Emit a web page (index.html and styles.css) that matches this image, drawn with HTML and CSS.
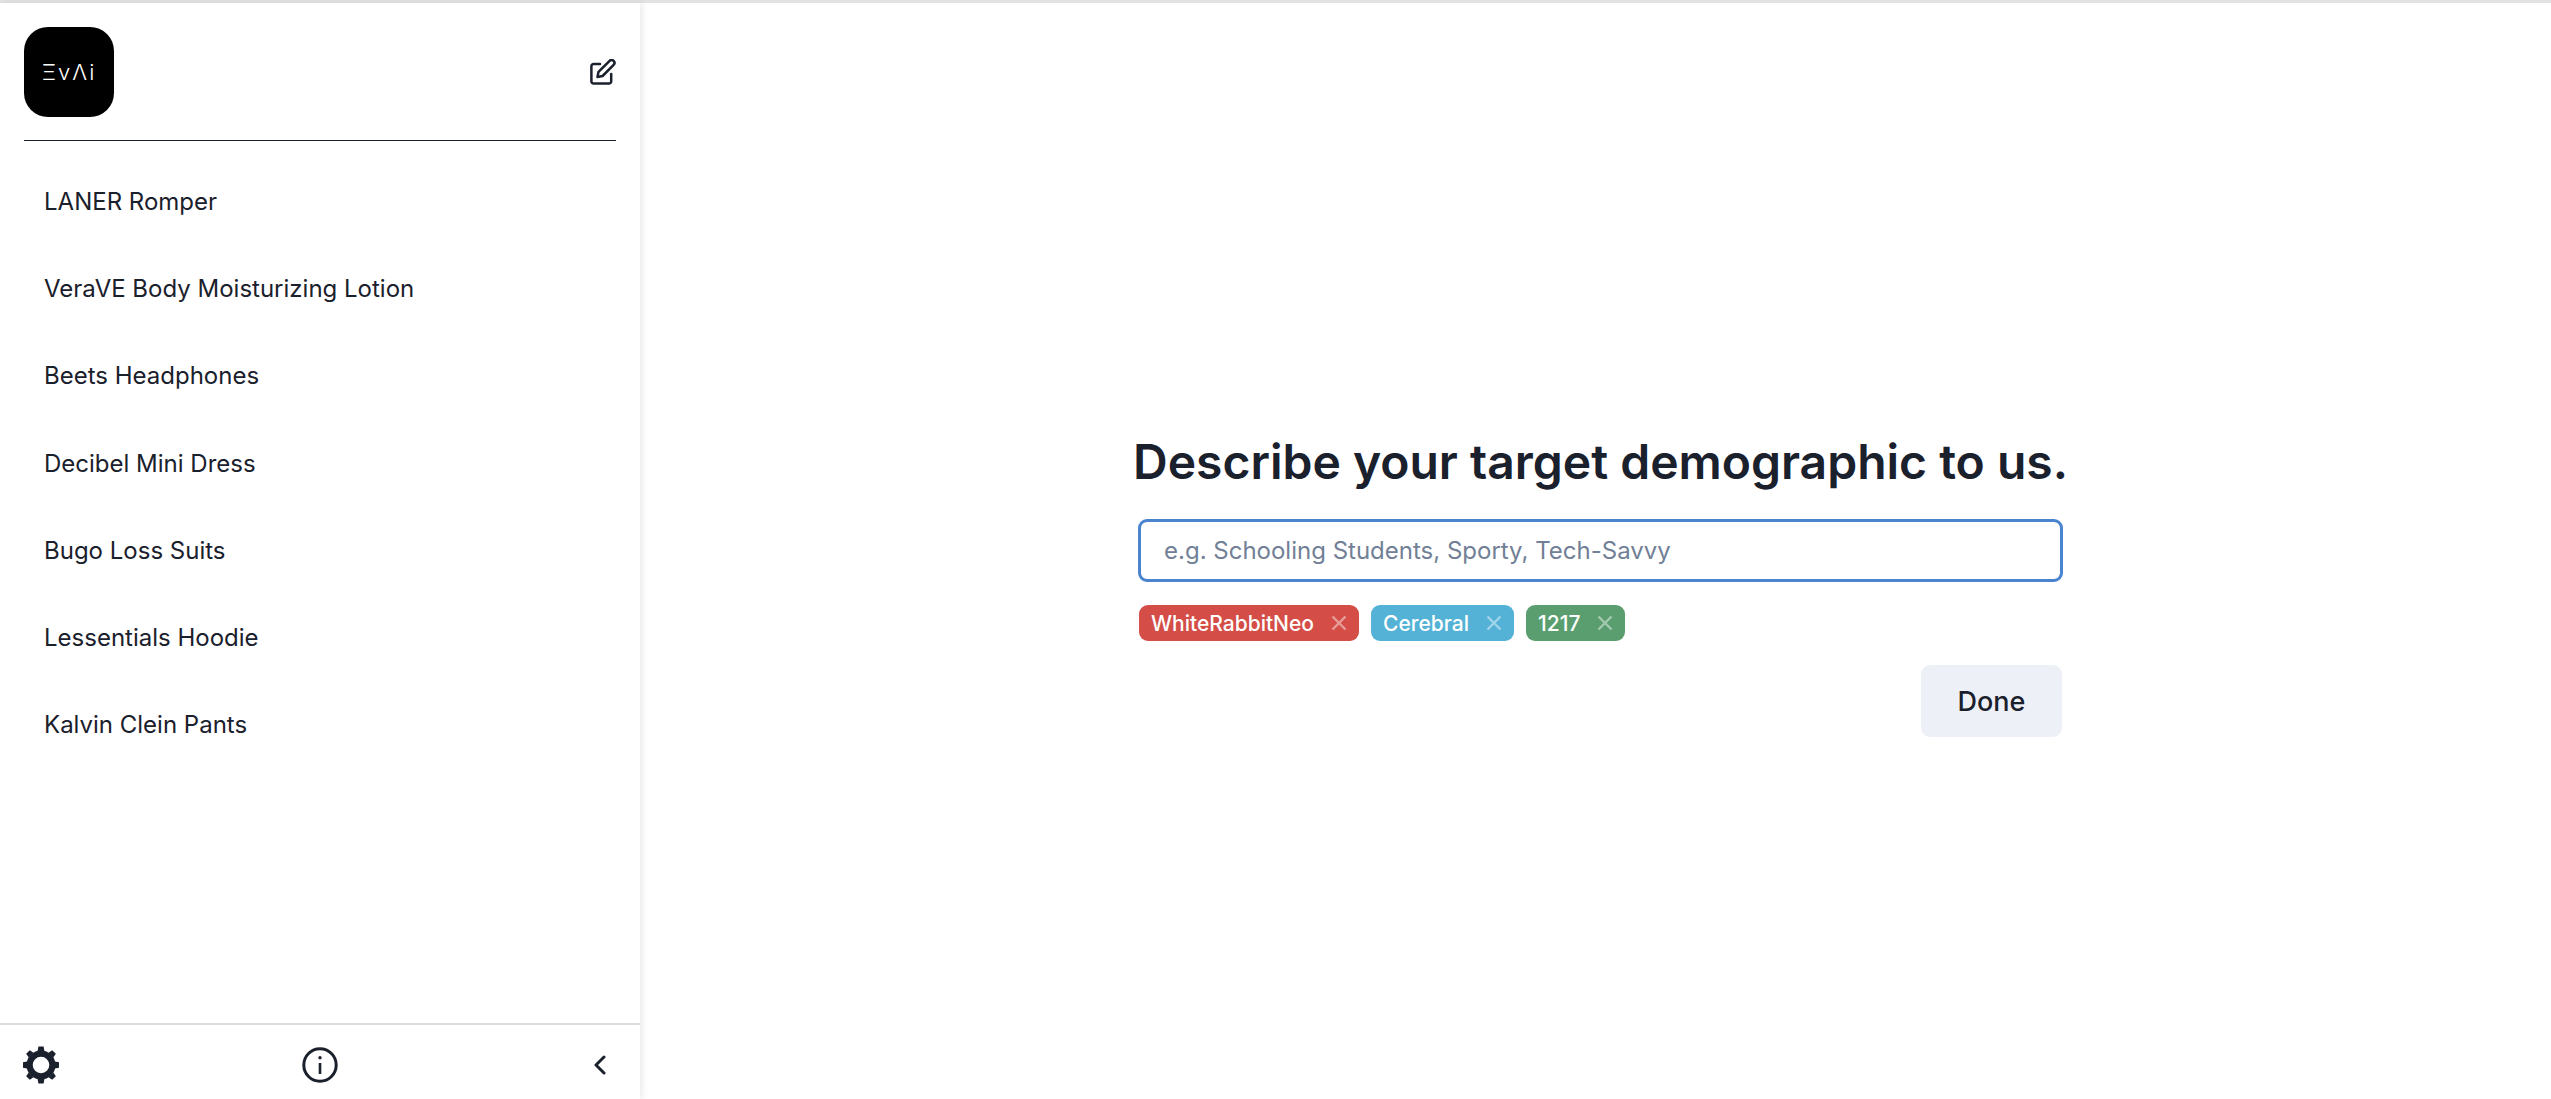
FILE: index.html
```html
<!DOCTYPE html>
<html lang="en">
<head>
<meta charset="utf-8">
<title>EvAi</title>
<link rel="stylesheet" href="styles.css">
</head>
<body>
<div class="topline"></div>
<div class="app">
  <aside class="sidebar">
    <header class="side-head">
      <div class="logo"><span class="logo-text">ΞvΛi</span></div>
      <button class="icon-btn" aria-label="New">
        <svg class="ic-edit" viewBox="0 0 26 26" fill="none" stroke="currentColor" stroke-width="2.5" stroke-linecap="round" stroke-linejoin="round"><path d="M10 5H3.6a2.2 2.2 0 0 0-2.2 2.2v15.2a2.2 2.2 0 0 0 2.2 2.2H19a2.2 2.2 0 0 0 2.2-2.2V15"/><path d="M7.5 18l1-5.2L19.6 1.8a2.8 2.8 0 0 1 4 4L12.6 17z"/></svg>
      </button>
    </header>
    <nav class="items">
      <a class="item">LANER Romper</a>
      <a class="item">VeraVE Body Moisturizing Lotion</a>
      <a class="item">Beets Headphones</a>
      <a class="item">Decibel Mini Dress</a>
      <a class="item">Bugo Loss Suits</a>
      <a class="item">Lessentials Hoodie</a>
      <a class="item">Kalvin Clein Pants</a>
    </nav>
    <footer class="side-foot">
      <svg class="ic-gear" viewBox="0 0 36 38" fill="currentColor">
        <defs><path id="tooth" d="M14.6 5 L15.4 .6 H20.6 L21.4 5 Z"/></defs>
        <circle cx="18" cy="19" r="11.4" fill="none" stroke="currentColor" stroke-width="6.2"/>
        <use href="#tooth"/>
        <use href="#tooth" transform="rotate(45 18 19)"/>
        <use href="#tooth" transform="rotate(90 18 19)"/>
        <use href="#tooth" transform="rotate(135 18 19)"/>
        <use href="#tooth" transform="rotate(180 18 19)"/>
        <use href="#tooth" transform="rotate(225 18 19)"/>
        <use href="#tooth" transform="rotate(270 18 19)"/>
        <use href="#tooth" transform="rotate(315 18 19)"/>
      </svg>
      <svg class="ic-info" viewBox="0 0 36 36" fill="none" stroke="currentColor" stroke-width="3"><circle cx="18" cy="18" r="16.2"/><path d="M18 16v11" stroke-width="2.6"/><circle cx="18" cy="10.8" r="1.7" fill="currentColor" stroke="none"/></svg>
      <svg class="ic-chev" viewBox="0 0 14 20" fill="none" stroke="currentColor" stroke-width="3" stroke-linecap="round" stroke-linejoin="round"><path d="M11 2L3 10l8 8"/></svg>
    </footer>
  </aside>
  <main class="main">
    <section class="panel">
      <h2 class="title">Describe your target demographic to us.</h2>
      <input class="field" type="text" placeholder="e.g. Schooling Students, Sporty, Tech-Savvy">
      <div class="tags">
        <span class="tag tag-red">WhiteRabbitNeo<svg class="x" viewBox="0 0 16 16"><path d="M1.5 1.5l13 13M14.5 1.5l-13 13"/></svg></span>
        <span class="tag tag-blue">Cerebral<svg class="x" viewBox="0 0 16 16"><path d="M1.5 1.5l13 13M14.5 1.5l-13 13"/></svg></span>
        <span class="tag tag-green">1217<svg class="x" viewBox="0 0 16 16"><path d="M1.5 1.5l13 13M14.5 1.5l-13 13"/></svg></span>
      </div>
      <div class="actions"><button class="done">Done</button></div>
    </section>
  </main>
</div>
</body>
</html>
```
FILE: styles.css
```css
* { box-sizing: border-box; }
html, body { height: 100%; }
body {
  margin: 0;
  background: #fff;
  color: #1a202c;
  font-family: Inter, "Liberation Sans", sans-serif;
  display: flex;
  flex-direction: column;
  overflow: hidden;
}
.topline { height: 3px; background: #e2e2e2; flex: none; }
.app { flex: 1; display: flex; min-height: 0; }
.sidebar {
  width: 640px;
  flex: none;
  display: flex;
  flex-direction: column;
  padding-top: 1px;
  box-shadow: 3px 0 6px rgba(0,0,0,.08);
}
.side-head {
  margin: 0 24px;
  height: 137px;
  padding-top: 23px;
  display: flex;
  justify-content: space-between;
  align-items: flex-start;
  border-bottom: 1px solid #1a202c;
}
.logo {
  width: 90px;
  height: 90px;
  background: #000;
  border-radius: 24px;
  display: flex;
  align-items: center;
  justify-content: center;
}
.logo-text {
  color: #fff;
  font-size: 22px;
  font-weight: 300;
  letter-spacing: 2px;
}
.icon-btn {
  border: 0;
  background: none;
  padding: 0;
  margin: 32px 0 0;
  color: #1a202c;
  display: flex;
}
.ic-edit { width: 26px; height: 26px; }
.items {
  flex: 1;
  display: flex;
  flex-direction: column;
  padding: 17px 44px 0;
}
.item {
  height: 87.3px;
  flex: none;
  display: flex;
  align-items: center;
  font-size: 24px;
  padding-bottom: 1px;
  color: #1a202c;
}
.side-foot {
  height: 76px;
  border-top: 2px solid #dcdcdc;
  display: grid;
  grid-template-columns: 1fr auto 1fr;
  align-items: center;
  padding: 6px 23px 0;
  color: #1a202c;
}
.ic-gear { width: 36px; height: 38px; }
.ic-info { width: 36px; height: 36px; }
.ic-chev { width: 14px; height: 20px; justify-self: end; margin-right: 10px; }
.main {
  flex: 1;
  display: flex;
  justify-content: center;
  padding: 432px 0 0 10px;
}
.panel { width: 925px; display: flex; flex-direction: column; }
.title {
  margin: 0 -10px 0 -5px;
  font-size: 48px;
  line-height: 54px;
  font-weight: 600;
  white-space: nowrap;
  color: #1a202c;
}
.field {
  margin-top: 30px;
  height: 63px;
  width: 100%;
  border: 3px solid #4a84cf;
  border-radius: 9px;
  padding: 0 23px;
  font: 400 24px Inter, "Liberation Sans", sans-serif;
  color: #1a202c;
  background: #fff;
  outline: 0;
}
.field::placeholder { color: #718096; opacity: 1; }
.tags { display: flex; gap: 12px; margin-top: 23px; padding-left: 1px; }
.tag {
  height: 36px;
  display: inline-flex;
  align-items: center;
  padding: 0 12px;
  border-radius: 9px;
  font-size: 21px;
  font-weight: 500;
  color: #fff;
}
.tag-red { background: #d44d47; }
.tag-blue { background: #54b2d6; }
.tag-green { background: #5a9e6f; }
.x {
  width: 16px;
  height: 16px;
  margin-left: 17px;
  fill: none;
  stroke: rgba(255,255,255,.45);
  stroke-width: 2.4;
}
.actions { display: flex; justify-content: flex-end; margin-top: 24px; padding-right: 1px; }
.done {
  width: 141px;
  height: 72px;
  border: 0;
  border-radius: 9px;
  background: #edf0f6;
  color: #1a202c;
  font: 500 27px Inter, "Liberation Sans", sans-serif;
}
```
